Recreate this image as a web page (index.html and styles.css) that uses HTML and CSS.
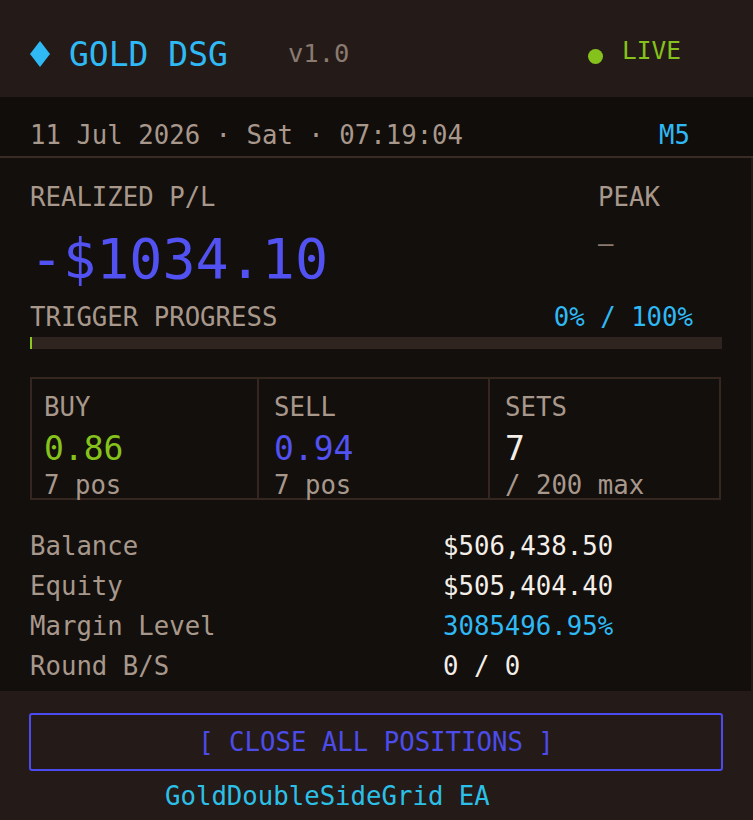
FILE: index.html
```html
<!DOCTYPE html>
<html>
<head>
<meta charset="utf-8">
<link rel="stylesheet" href="styles.css">
</head>
<body>
<div class="panel">
  <header class="header">
    <svg class="diamond" width="20" height="26" viewBox="0 0 20 26"><polygon points="10,0 20,13 10,26 0,13" fill="#2fb9f5"/></svg>
    <span class="title">GOLD DSG</span>
    <span class="version">v1.0</span>
    <span class="spacer"></span>
    <span class="status"><span class="dot"></span><span class="live">LIVE</span></span>
  </header>
  <div class="daterow">
    <span class="date">11 Jul 2026 · Sat · 07:19:04</span>
    <span class="tf">M5</span>
  </div>
  <main class="body">
    <div class="plrow">
      <div class="plmain">
        <div class="label">REALIZED P/L</div>
        <div class="plvalue">-$1034.10</div>
      </div>
      <div class="peak">
        <div class="label">PEAK</div>
        <div class="peakvalue">—</div>
      </div>
    </div>
    <div class="trigger">
      <span class="label">TRIGGER PROGRESS</span>
      <span class="pct">0% / 100%</span>
    </div>
    <div class="track"><div class="fill" style="width:2px"></div></div>
    <div class="stats">
      <div class="stat first">
        <div class="label">BUY</div>
        <div class="sval green">0.86</div>
        <div class="sub">7 pos</div>
      </div>
      <div class="stat">
        <div class="label">SELL</div>
        <div class="sval blue">0.94</div>
        <div class="sub">7 pos</div>
      </div>
      <div class="stat">
        <div class="label">SETS</div>
        <div class="sval white">7</div>
        <div class="sub">/ 200 max</div>
      </div>
    </div>
    <div class="info">
      <span class="ilabel">Balance</span><span class="ival">$506,438.50</span>
      <span class="ilabel">Equity</span><span class="ival">$505,404.40</span>
      <span class="ilabel">Margin Level</span><span class="ival cyan">3085496.95%</span>
      <span class="ilabel">Round B/S</span><span class="ival">0 / 0</span>
    </div>
  </main>
  <footer class="bottom">
    <button class="closebtn">[ CLOSE ALL POSITIONS ]</button>
    <div class="ea">GoldDoubleSideGrid EA</div>
  </footer>
</div>
</body>
</html>
```
FILE: styles.css
```css
html, body {
  margin: 0;
  padding: 0;
  background: #241a17;
}
body {
  font-family: "DejaVu Sans Mono", "Liberation Mono", monospace;
  font-size: 25.7px;
  color: #a8988c;
  width: 753px;
  height: 820px;
  overflow: hidden;
}
.panel {
  width: 753px;
}
.header {
  box-sizing: border-box;
  height: 97px;
  padding: 11px 72px 0 30px;
  display: flex;
  align-items: center;
  background: #241b18;
}
.diamond {
  flex: none;
  margin-right: 19px;
}
.title {
  font-size: 33px;
  line-height: 1;
  color: #2fb9f5;
}
.version {
  margin-left: 60px;
  font-size: 25.5px;
  line-height: 1;
  color: #8a7a70;
}
.spacer {
  flex: 1;
}
.status {
  display: flex;
  align-items: center;
  margin-bottom: 5px;
}
.dot {
  width: 15px;
  height: 15px;
  border-radius: 50%;
  background: #86c21c;
  margin-right: 19px;
  margin-top: 9px;
}
.live {
  font-size: 24.5px;
  line-height: 1;
  color: #86c21c;
}
.daterow {
  box-sizing: border-box;
  height: 61px;
  padding: 19px 63px 0 30px;
  display: flex;
  align-items: center;
  justify-content: space-between;
  background: #110d0b;
  border-bottom: 2px solid #3a2b25;
}
.date {
  line-height: 1;
}
.tf {
  line-height: 1;
  color: #2fb9f5;
}
.body {
  background: #130f0c;
  padding: 19px 29px 5px 30px;
  border-right: 2px solid #241b18;
}
.label {
  line-height: 40px;
  color: #a8988c;
}
.plrow {
  display: flex;
}
.plmain {
  flex: 1;
}
.plvalue {
  margin-top: 12px;
  font-size: 55px;
  line-height: 60px;
  color: #5252f2;
}
.peak {
  width: 124px;
}
.peakvalue {
  margin-top: 6px;
  line-height: 40px;
  color: #8a7a70;
}
.trigger {
  margin-top: 8px;
  padding-right: 29px;
  display: flex;
  justify-content: space-between;
}
.pct {
  line-height: 40px;
  color: #2fb9f5;
}
.track {
  height: 12px;
  background: #2f2420;
}
.fill {
  height: 100%;
  background: #8cc61f;
}
.stats {
  margin-top: 28px;
  width: 691px;
  box-sizing: border-box;
  border: 2px solid #35271f;
  display: grid;
  grid-template-columns: 225px 1fr 1fr;
}
.stat {
  padding: 10px 0 0 15px;
  border-left: 2px solid #35271f;
}
.stat.first {
  padding-left: 12px;
  border-left: none;
}
.stat .label {
  line-height: 36px;
}
.sval {
  margin-top: 4px;
  font-size: 33px;
  line-height: 40px;
}
.sub {
  margin-top: 3px;
  line-height: 26px;
  color: #a8988c;
}
.green { color: #86c21c; }
.blue { color: #5252f2; }
.white { color: #f4eee8; }
.cyan { color: #2fb9f5 !important; }
.info {
  margin-top: 26px;
  display: grid;
  grid-template-columns: 413px 1fr;
  line-height: 40px;
}
.ilabel {
  color: #a8988c;
}
.ival {
  color: #f4eee8;
}
.bottom {
  background: #241a17;
  padding: 22px 30px 0 29px;
}
.closebtn {
  display: block;
  width: 694px;
  height: 58px;
  margin: 0;
  padding: 0;
  box-sizing: border-box;
  background: transparent;
  border: 2px solid #4b4bf0;
  border-radius: 3px;
  font-family: "DejaVu Sans Mono", "Liberation Mono", monospace;
  font-size: 25.7px;
  color: #4c4cea;
  text-align: center;
}
.ea {
  margin-top: 5px;
  padding-left: 136px;
  line-height: 40px;
  color: #2cc0e8;
}
```
